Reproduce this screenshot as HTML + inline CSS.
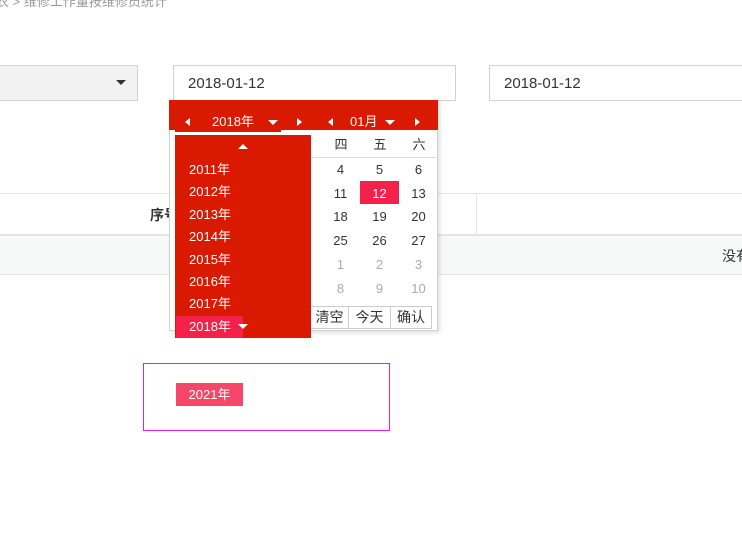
<!DOCTYPE html>
<html><head><meta charset="utf-8"><style>
*{margin:0;padding:0;box-sizing:border-box}
body{width:742px;height:558px;overflow:hidden;background:#fff;font-family:"Liberation Sans","Noto Sans CJK SC",sans-serif;position:relative}
.a{position:absolute}
.t{position:absolute;font-size:13px;line-height:16px;text-align:center}
.tri{position:absolute;width:0;height:0}
.r{display:flex}.r span{width:39px;text-align:center}
</style></head><body>
<div class="a" style="left:-4px;top:-6px;font-size:13px;color:#999;line-height:16px;white-space:nowrap">农 &gt; 维修工作量按维修员统计</div>

<div class="a" style="left:-2px;top:65px;width:140px;height:36px;background:#f2f2f2;border:1px solid #d2d2d2"></div>
<div class="tri" style="left:116px;top:80px;border-left:5px solid transparent;border-right:5px solid transparent;border-top:5px solid #333"></div>
<div class="a" style="left:173px;top:65px;width:283px;height:36px;border:1px solid #d2d2d2;font-size:15px;line-height:36px;padding-left:14px;color:#333">2018-01-12</div>
<div class="a" style="left:489px;top:65px;width:260px;height:36px;border:1px solid #d2d2d2;font-size:15px;line-height:36px;padding-left:14px;color:#333">2018-01-12</div>

<div class="a" style="left:0;top:193px;width:742px;height:1px;background:#e6e6e6"></div>
<div class="a" style="left:0;top:234px;width:742px;height:41px;background:#f7f8f8;border-top:2px solid #e2e6e8;border-bottom:1px solid #e6e6e6"></div>
<div class="a" style="left:476px;top:194px;width:1px;height:40px;background:#e6e6e6"></div>
<div class="a" style="left:150px;top:205px;font-size:14px;font-weight:bold;color:#333;white-space:nowrap">序号</div>
<div class="a" style="left:722px;top:246px;font-size:14px;color:#333;white-space:nowrap">没有</div>

<!-- popup -->
<div class="a" style="left:169px;top:100px;width:269px;height:231px;background:#fff;border:1px solid #d2d2d2;box-shadow:2px 2px 4px rgba(0,0,0,.12)"></div>
<div class="a" style="left:169px;top:100px;width:269px;height:30px;background:#d91a00"></div>
<div class="a" style="left:175px;top:130px;width:106px;height:2px;background:#d91a00"></div>
<div class="tri" style="left:185px;top:118px;border-top:4px solid transparent;border-bottom:4px solid transparent;border-right:5px solid #fff"></div>
<div class="t" style="left:212px;top:114px;color:#fff">2018年</div>
<div class="tri" style="left:268px;top:120px;border-left:5px solid transparent;border-right:5px solid transparent;border-top:5px solid #fff"></div>
<div class="tri" style="left:297px;top:118px;border-top:4px solid transparent;border-bottom:4px solid transparent;border-left:5px solid #fff"></div>
<div class="tri" style="left:328px;top:118px;border-top:4px solid transparent;border-bottom:4px solid transparent;border-right:5px solid #fff"></div>
<div class="t" style="left:350px;top:114px;color:#fff">01月</div>
<div class="tri" style="left:385px;top:120px;border-left:5px solid transparent;border-right:5px solid transparent;border-top:5px solid #fff"></div>
<div class="tri" style="left:415px;top:118px;border-top:4px solid transparent;border-bottom:4px solid transparent;border-left:5px solid #fff"></div>

<div class="t" style="left:326px;top:137px;width:30px;color:#333">四</div>
<div class="t" style="left:365px;top:137px;width:30px;color:#333">五</div>
<div class="t" style="left:404px;top:137px;width:30px;color:#333">六</div>
<div class="a" style="left:311px;top:157px;width:127px;height:1px;background:#ddd"></div>
<div class="a" style="left:360px;top:181px;width:39px;height:23px;background:#f5214a"></div>
<div class="a" style="left:321px;top:158px;width:117px;font-size:13px;line-height:23.7px;color:#333">
<div class="r"><span>4</span><span>5</span><span>6</span></div>
<div class="r"><span>11</span><span style="color:#fff">12</span><span>13</span></div>
<div class="r"><span>18</span><span>19</span><span>20</span></div>
<div class="r"><span>25</span><span>26</span><span>27</span></div>
<div class="r" style="color:#aaa"><span>1</span><span>2</span><span>3</span></div>
<div class="r" style="color:#aaa"><span>8</span><span>9</span><span>10</span></div>
</div>
<div class="a" style="left:310px;top:306px;width:122px;height:23px;border:1px solid #ccc;display:flex;font-size:14px;line-height:21px;color:#333">
<span style="width:38px;text-align:center;border-right:1px solid #ccc">清空</span><span style="width:42px;text-align:center;border-right:1px solid #ccc">今天</span><span style="flex:1;text-align:center">确认</span></div>

<!-- year list -->
<div class="a" style="left:175px;top:135px;width:136px;height:203px;background:#d91a00"></div>
<div class="tri" style="left:238px;top:144px;border-left:5px solid transparent;border-right:5px solid transparent;border-bottom:5px solid #fff"></div>
<div class="a" style="left:176px;top:316px;width:67px;height:22px;background:#f5214a"></div>
<div class="tri" style="left:238px;top:324px;border-left:5px solid transparent;border-right:5px solid transparent;border-top:5px solid #fff"></div>
<div class="a" style="left:189px;top:159px;font-size:13px;line-height:22.4px;color:#fff">2011年<br>2012年<br>2013年<br>2014年<br>2015年<br>2016年<br>2017年<br>2018年</div>

<div class="a" style="left:143px;top:363px;width:247px;height:68px;border:1px solid #e81ee8"></div>
<div class="a" style="left:176px;top:383px;width:67px;height:23px;background:#f5476a;color:#fff;font-size:13px;line-height:23px;text-align:center">2021年</div>
</body></html>
